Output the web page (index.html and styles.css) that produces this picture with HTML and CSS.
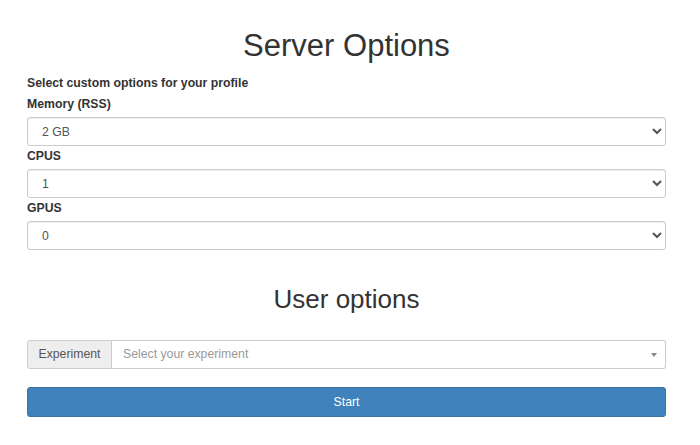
FILE: index.html
```html
<!DOCTYPE html>
<html>
<head>
<meta charset="utf-8">
<link rel="stylesheet" href="styles.css">
</head>
<body>
<div class="container">
  <h1 class="title">Server Options</h1>
  <div class="intro">Select custom options for your profile</div>
  <label class="field-label" for="mem">Memory (RSS)</label>
  <select id="mem" class="form-control"><option>2 GB</option></select>
  <label class="field-label" for="cpu">CPUS</label>
  <select id="cpu" class="form-control"><option>1</option></select>
  <label class="field-label" for="gpu">GPUS</label>
  <select id="gpu" class="form-control"><option>0</option></select>

  <h2 class="subtitle">User options</h2>
  <div class="input-group">
    <span class="addon">Experiment</span>
    <div class="combo">
      <span class="placeholder">Select your experiment</span>
      <span class="caret"></span>
    </div>
  </div>
  <button class="btn-start" type="button">Start</button>
</div>
</body>
</html>
```
FILE: styles.css
```css
* { box-sizing: border-box; }
html, body { margin: 0; padding: 0; background: #fff; }
body {
  font-family: "Liberation Sans", Arial, sans-serif;
  font-size: 12.25px;
  line-height: 17px;
  color: #333;
}
.container {
  width: 639px;
  margin-left: 27px;
  display: flex;
  flex-direction: column;
}
.title {
  margin: 29px 0 0;
  font-size: 31px;
  font-weight: 400;
  line-height: 34px;
  text-align: center;
  color: #333;
}
.intro {
  margin-top: 12px;
  font-weight: 700;
}
.field-label {
  display: block;
  margin-top: 4px;
  margin-bottom: 4px;
  font-weight: 700;
}
.form-control + .field-label { margin-top: 2px; }
.form-control {
  display: block;
  width: 100%;
  height: 29px;
  padding: 0 8px 0 10px;
  font-family: "Liberation Sans", Arial, sans-serif;
  font-size: 12.25px;
  color: #555;
  background: #fff;
  border: 1px solid #ccc;
  border-radius: 3px;
  box-shadow: inset 0 1px 1px rgba(0,0,0,.075);
}
.subtitle {
  margin: 35px 0 0;
  font-size: 26px;
  font-weight: 400;
  line-height: 29px;
  text-align: center;
  color: #333;
}
.input-group {
  margin-top: 26px;
  display: flex;
  height: 29px;
}
.addon {
  width: 85px;
  display: flex;
  align-items: center;
  justify-content: center;
  background: #eee;
  color: #555;
  border: 1px solid #ccc;
  border-radius: 3px 0 0 3px;
}
.combo {
  flex: 1;
  display: flex;
  align-items: center;
  justify-content: space-between;
  padding: 0 8px 0 11px;
  border: 1px solid #ccc;
  border-left: none;
  border-radius: 0 3px 3px 0;
  background: #fff;
}
.placeholder { color: #999; }
.caret {
  width: 0;
  height: 0;
  border-left: 3px solid transparent;
  border-right: 3px solid transparent;
  border-top: 4px solid #888;
}
.btn-start {
  margin-top: 18px;
  height: 30px;
  width: 100%;
  border: 1px solid #3a75a8;
  border-radius: 3px;
  background: #3f81ba;
  color: #fff;
  font-family: "Liberation Sans", Arial, sans-serif;
  font-size: 12.25px;
}
```
